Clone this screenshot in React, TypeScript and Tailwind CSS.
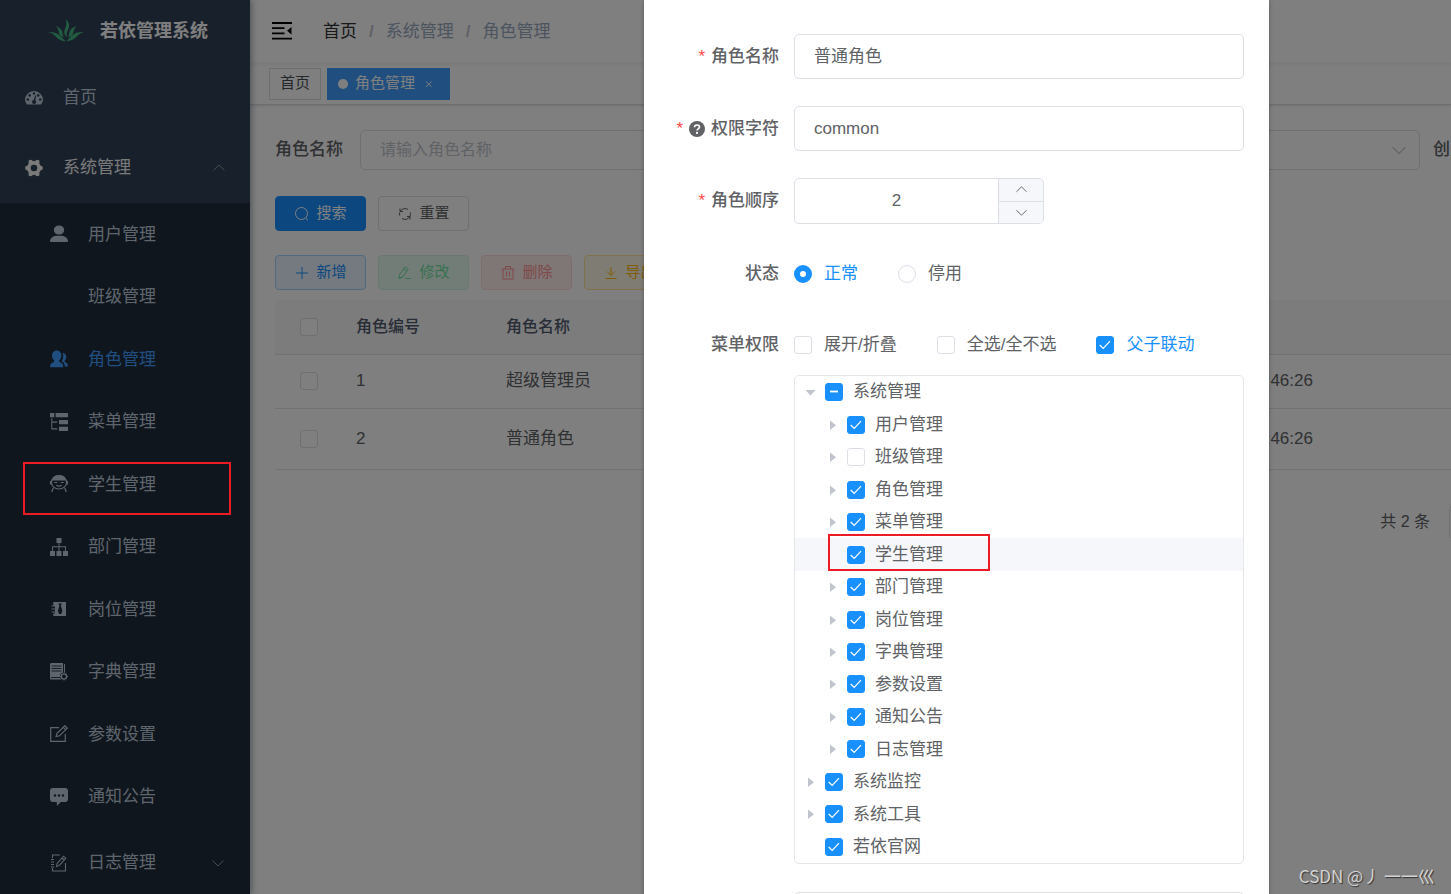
import type { ReactNode } from 'react'

const ICONS: Record<string, ReactNode> = {
  dashboard: (
    <>
      <path d="M2 15.5A9 9 0 0 1 0 11a9 9 0 0 1 18 0 9 9 0 0 1-2 4.500z" />
      <g fill="#304156">
        <circle cx="2.800" cy="10.500" r="1.300" />
        <circle cx="4.700" cy="6.400" r="1.300" />
        <circle cx="9" cy="4.500" r="1.300" />
        <circle cx="13.300" cy="6.400" r="1.300" />
        <circle cx="15.200" cy="10.500" r="1.300" />
        <path d="M10.400 6.300l.9.3-1 4.700a2 2 0 1 1-1.700-.3z" />
      </g>
    </>
  ),
  system: (
    <>
      <circle cx="9" cy="9" r="7" />
      <circle cx="2.300" cy="9" r="2.200" />
      <circle cx="15.700" cy="9" r="2.200" />
      <circle cx="5.600" cy="2.900" r="2.200" />
      <circle cx="12.400" cy="2.900" r="2.200" />
      <circle cx="5.600" cy="15.100" r="2.200" />
      <circle cx="12.400" cy="15.100" r="2.200" />
      <circle cx="9" cy="9" r="3.300" fill="#304156" />
    </>
  ),
  user: (
    <>
      <ellipse cx="9" cy="5" rx="5.200" ry="4.500" />
      <path d="M0 16.500C0 13 3 10.700 6.800 10.700h4.400c3.800 0 6.800 2.300 6.800 5.800 0 .4-1 .5-4 .5H4c-3 0-4-.1-4-.5z" />
    </>
  ),
  peoples: (
    <>
      <path d="M6.700.4c2.700 0 4.700 2.200 4.700 5.200 0 2-.9 3.900-2.300 4.900-.2 1 .4 1.300 1.600 1.900 1.700.9 2.600 2.300 2.600 4.900H0c0-2.600 1-4 2.700-4.900 1.200-.6 1.800-.9 1.600-1.900C2.900 9.500 2 7.600 2 5.600 2 2.600 4 .4 6.700.4z" />
      <path d="M12.500 3c2.100 0 3.800 1.500 3.800 4 0 1.500-.7 2.900-1.700 3.700-.2.900.3 1.100 1.300 1.700 1.400.8 2.100 1.900 2.100 4h-3.200c0-2.500-1.200-4.200-3.300-5.300 1.200-1.300 1.800-3.200 1.700-5.200 0-1.100-.3-2-.7-2.900z" />
    </>
  ),
  treeTable: (
    <path d="M0 0h4.300v4.300H0zM5.600 0H18v4.300H5.600zM9 7h9v4.200H9zM9 13.800h9V18H9zM1.300 5h1v3.600h5v1.100h-5v5.600h5v1.100h-6z" />
  ),
  student: (
    <g fill="none" stroke="currentColor" strokeWidth="1.200">
      <path d="M2.500 5C3 2.500 5.500.7 9 .7s6 1.800 6.500 4.300z" fill="currentColor" />
      <ellipse cx="9" cy="7.500" rx="7.600" ry="6.500" />
      <path d="M.6 6v3.500M17.400 6v3.500M4.300 7.500h3M10.700 7.500h3M6.300 10.300c1.500 1 3.900 1 5.400 0M3.300 13L1.700 17M14.700 13l1.600 4" />
    </g>
  ),
  tree: (
    <path d="M6.500 0h5v5h-2v3.300H16V13h2v5h-5v-5h2V9.300H9.500V13h2v5h-5v-5h2V9.300H3V13h2v5H0v-5h2V8.300h6.500V5h-2z" />
  ),
  post: (
    <>
      <path d="M3.300 2H16v14H3.300v-2.500H5v-1H1.500v-1H5v-2H1.500v-1H5v-2H1.500v-1h1.800z" />
      <path d="M8.300 3.500h3.600l-1.100 2 1.600 5.300-1.100 3.200H9l-1.100-3.200L9.400 5.500z" fill="#1f2d3d" />
    </>
  ),
  dict: (
    <>
      <path d="M0 1.500C0 .7.600 0 1.500 0H13v16.500H1.500C.6 16.500 0 16 0 15zM14 1h1v10h-1z" />
      <path d="M1.500 3h10M1.500 5.500h10M1.500 8h10M1 14.500h9" stroke="#1f2d3d" strokeWidth=".9" />
      <circle cx="14" cy="13.500" r="4" fill="#1f2d3d" />
      <circle cx="14" cy="13.500" r="2.600" fill="none" stroke="currentColor" strokeWidth="1.300" />
      <path d="M14 9.500v1M14 16.500v1M10 13.500h1M17 13.500h1M11.500 11l.8.8M16.500 11l-.8.8M11.500 16l.8-.8M16.500 16l-.8-.8" stroke="currentColor" />
    </>
  ),
  edit: (
    <path
      d="M9 2.700H.7v13.700h14.600V9M6.200 11.500l.8-3.300L14.800.8l2.400 2.300-7.700 7.700zM13.300 2.300l2.300 2.300"
      fill="none"
      stroke="currentColor"
      strokeWidth="1.200"
    />
  ),
  message: (
    <>
      <path d="M2.700 0h12.600C16.800 0 18 1.200 18 2.800v8.400c0 1.600-1.200 2.800-2.700 2.800h-4.500L7 18l-.3-4h-4C1.200 14 0 12.800 0 11.200V2.800C0 1.200 1.200 0 2.700 0z" />
      <g fill="#1f2d3d">
        <circle cx="5" cy="7.500" r="1.200" />
        <circle cx="9" cy="7.500" r="1.200" />
        <circle cx="13" cy="7.500" r="1.200" />
      </g>
    </>
  ),
  log: (
    <path
      d="M10 1H2.500v3M2.500 14v3h13V9M1 5.500h3M1 8h3M1 10.500h3M1 13h3M6.500 12.500l.7-3 6.300-7.300 2.300 2-6.300 7.200zM12 4l2.300 2"
      fill="none"
      stroke="currentColor"
      strokeWidth="1.100"
    />
  ),
}

const SUB_MENU = [
  { title: '用户管理', icon: 'user' },
  { title: '班级管理', icon: '' },
  { title: '角色管理', icon: 'peoples', active: true },
  { title: '菜单管理', icon: 'treeTable' },
  { title: '学生管理', icon: 'student' },
  { title: '部门管理', icon: 'tree' },
  { title: '岗位管理', icon: 'post' },
  { title: '字典管理', icon: 'dict' },
  { title: '参数设置', icon: 'edit' },
  { title: '通知公告', icon: 'message' },
]

const ROLES = [
  { id: 1, name: '超级管理员', key: 'admin', sort: 1, time: '2023-04-23 16:46:26', height: 'h-[54px]' },
  { id: 2, name: '普通角色', key: 'common', sort: 2, time: '2023-04-23 16:46:26', height: 'h-[61px]' },
]

type TreeNode = {
  label: string
  level: 0 | 1
  state: 'on' | 'off' | 'partial'
  caret?: 'open' | 'closed'
  current?: boolean
}

const TREE: TreeNode[] = [
  { label: '系统管理', level: 0, state: 'partial', caret: 'open' },
  { label: '用户管理', level: 1, state: 'on', caret: 'closed' },
  { label: '班级管理', level: 1, state: 'off', caret: 'closed' },
  { label: '角色管理', level: 1, state: 'on', caret: 'closed' },
  { label: '菜单管理', level: 1, state: 'on', caret: 'closed' },
  { label: '学生管理', level: 1, state: 'on', current: true },
  { label: '部门管理', level: 1, state: 'on', caret: 'closed' },
  { label: '岗位管理', level: 1, state: 'on', caret: 'closed' },
  { label: '字典管理', level: 1, state: 'on', caret: 'closed' },
  { label: '参数设置', level: 1, state: 'on', caret: 'closed' },
  { label: '通知公告', level: 1, state: 'on', caret: 'closed' },
  { label: '日志管理', level: 1, state: 'on', caret: 'closed' },
  { label: '系统监控', level: 0, state: 'on', caret: 'closed' },
  { label: '系统工具', level: 0, state: 'on', caret: 'closed' },
  { label: '若依官网', level: 0, state: 'on' },
]

function NavIcon({ name }: { name: string }) {
  return (
    <svg className="size-[18px] shrink-0" viewBox="0 0 18 18" fill="currentColor" aria-hidden="true">
      {ICONS[name]}
    </svg>
  )
}

function Chevron({ up, className }: { up?: boolean; className: string }) {
  return (
    <svg className={className} viewBox="0 0 12 12" fill="none" stroke="currentColor" aria-hidden="true">
      <path d={up ? 'M.5 8.500L6 3l5.500 5.500' : 'M.5 3.500L6 9l5.500-5.500'} />
    </svg>
  )
}

function Check({ state = 'off', label }: { state?: 'on' | 'off' | 'partial'; label?: string }) {
  return (
    <span className="grid size-[18px] shrink-0">
      <input
        type="checkbox"
        aria-label={label}
        defaultChecked={state === 'on'}
        className={`col-start-1 row-start-1 size-[18px] appearance-none rounded-[3px] border ${
          state === 'off' ? 'border-[#dcdfe6] bg-white' : 'border-[#1890ff] bg-[#1890ff]'
        }`}
      />
      {state !== 'off' && (
        <svg
          className="pointer-events-none col-start-1 row-start-1 size-[18px]"
          viewBox="0 0 18 18"
          fill="none"
          stroke="#fff"
          aria-hidden="true"
        >
          {state === 'on' ? (
            <path d="M3.700 9l3.500 3.500L14 5.200" strokeWidth="1.200" />
          ) : (
            <path d="M5 8.500h8" strokeWidth="1.800" />
          )}
        </svg>
      )}
    </span>
  )
}

function Sidebar() {
  return (
    <aside className="z-10 flex w-[250px] shrink-0 flex-col bg-[#304156] text-[17px] text-[#bfcbd9] shadow-[2px_0_6px_rgba(0,21,41,0.35)]">
      <a href="#" className="flex h-[62px] shrink-0 items-center gap-4 pl-12">
        <svg className="h-6 w-9 shrink-0" viewBox="0 0 36 24" fill="#42b883" aria-hidden="true">
          <path d="M17.500 0c3.500 3 4.500 6 3 9.500-1.500 3.500-2.500 5.500-1.500 9-2.500-2.500-3.500-5-2-8.500C18.500 6.500 19 3.500 17.500 0z" />
          <path d="M7.500 7c4.500 1.500 6.500 3.500 7 7 .2 1.700.5 3 1.500 4.500-3.500-1-5-3-5.200-5.700C10.500 10.500 9.500 8.800 7.500 7z" />
          <path d="M29 7c-4.500 1-7 3.500-7.700 7-.2 1.700-.5 3-1.300 4.500 3.300-1 5-3 5.500-5.700.4-2.300 1.500-4 3.500-5.800z" />
          <path d="M0 13c5.500-.3 9 .8 12 3.700 2 2 3.700 3.500 6 5.800-4.500-.5-7.300-1.700-9.500-4.200C6 15.500 4 14 0 13z" />
          <path d="M36 13c-5.500-.3-9 .8-12 3.500-2 1.700-3.500 3.500-5.500 5.800 4.500-.5 7-1.500 9.500-4 2.500-2.800 4.500-4.300 8-5.300z" />
        </svg>
        <h1 className="text-[18px] font-bold text-white">若依管理系统</h1>
      </a>
      <nav className="mt-px">
        <a href="#" className="flex h-[70px] items-center gap-5 px-[25px]">
          <NavIcon name="dashboard" />
          首页
        </a>
        <button type="button" className="flex h-[70px] w-full items-center gap-5 px-[25px] text-[#f4f4f5]">
          <NavIcon name="system" />
          <span className="flex-1 text-left">系统管理</span>
          <Chevron up className="size-3 text-[#909399]" />
        </button>
        <div className="bg-[#1f2d3d]">
          <ul className="flex h-[625px] flex-col">
            {SUB_MENU.map((item) => (
              <li key={item.title} className="flex flex-1">
                <a
                  href="#"
                  className={`flex flex-1 items-center gap-5 pl-[50px] ${item.active ? 'text-[#409eff]' : ''}`}
                >
                  <NavIcon name={item.icon} />
                  {item.title}
                </a>
              </li>
            ))}
          </ul>
          <button type="button" className="flex h-[70px] w-full items-center gap-5 pr-[26px] pl-[50px]">
            <NavIcon name="log" />
            <span className="flex-1 text-left">日志管理</span>
            <Chevron className="size-3 text-[#909399]" />
          </button>
        </div>
      </nav>
    </aside>
  )
}

function Navbar() {
  return (
    <header className="flex h-[63px] shrink-0 items-center pl-[22px] shadow-[0_1px_4px_rgba(0,21,41,0.08)]">
      <button type="button" aria-label="折叠菜单">
        <svg className="size-5" viewBox="0 0 20 20" aria-hidden="true">
          <path d="M0 1h20M0 6.200h12.500M0 11.400h12.500M0 16.600h20" stroke="#000" strokeWidth="1.800" fill="none" />
          <path d="M19.500 5v7.500L15 8.800z" />
        </svg>
      </button>
      <nav className="ml-[31px] flex gap-3 text-[17px] text-[#97a8be]">
        <a href="#" className="text-[#303133]">
          首页
        </a>
        <span className="font-bold text-[#c0c4cc]">/</span>
        <span>系统管理</span>
        <span className="font-bold text-[#c0c4cc]">/</span>
        <span>角色管理</span>
      </nav>
    </header>
  )
}

function TagsView() {
  return (
    <div className="flex h-[42px] shrink-0 items-center gap-1.5 border-b border-[#d8dce5] pl-[19px] text-[15px] shadow-[0_1px_3px_rgba(0,0,0,0.12)]">
      <a href="#" className="flex h-8 items-center border border-[#d8dce5] px-2.5 text-[#495057]">
        首页
      </a>
      <a href="#" className="flex h-8 items-center border border-[#409eff] bg-[#409eff] px-2.5 text-white">
        <span className="mr-[7px] size-2.5 rounded-full bg-white" />
        角色管理
        <svg className="mr-1.5 ml-2.5 size-2" viewBox="0 0 8 8" stroke="#fff" fill="none" aria-hidden="true">
          <path d="M1 1.500l5.500 5.500M6.500 1.500L1 7" />
        </svg>
      </a>
    </div>
  )
}

function SearchForm() {
  return (
    <form className="flex text-[17px] text-[#606266]">
      <label htmlFor="q-name" className="w-[85px] shrink-0 self-center font-medium">
        角色名称
      </label>
      <input
        id="q-name"
        placeholder="请输入角色名称"
        className="h-10 w-[300px] shrink-0 rounded-[5px] border border-[#dcdfe6] px-[19px] text-[16px] placeholder:text-[#c0c4cc]"
      />
      <label htmlFor="q-key" className="ml-[13px] w-[85px] shrink-0 self-center font-medium">
        权限字符
      </label>
      <input
        id="q-key"
        placeholder="请输入权限字符"
        className="h-10 w-[300px] shrink-0 rounded-[5px] border border-[#dcdfe6] px-[19px] text-[16px] placeholder:text-[#c0c4cc]"
      />
      <label htmlFor="q-status" className="ml-3 w-[50px] shrink-0 self-center font-medium">
        状态
      </label>
      <span className="grid w-[300px] shrink-0 items-center">
        <select
          id="q-status"
          className="col-start-1 row-start-1 h-10 appearance-none rounded-[5px] border border-[#dcdfe6] px-[19px] text-[16px] text-[#c0c4cc]"
        >
          <option>角色状态</option>
          <option>正常</option>
          <option>停用</option>
        </select>
        <Chevron className="pointer-events-none col-start-1 row-start-1 mr-3.5 size-3.5 justify-self-end text-[#c0c4cc]" />
      </span>
      <span className="ml-[13px] shrink-0 self-center font-medium">创建时间</span>
    </form>
  )
}

const BUTTON = 'flex h-[35px] w-[91px] shrink-0 items-center justify-center gap-1.5 rounded-[4px] border text-[15px]'

function ButtonIcon({ d }: { d: string }) {
  return (
    <svg className="size-4" viewBox="0 0 16 16" fill="none" stroke="currentColor" aria-hidden="true">
      <path d={d} />
    </svg>
  )
}

function Toolbar() {
  return (
    <>
      <div className="mt-[26px] flex gap-3">
        <button type="button" className={`${BUTTON} border-[#1890ff] bg-[#1890ff] text-white`}>
          <ButtonIcon d="M7.500 1.500a6 6 0 1 1 0 12 6 6 0 0 1 0-12zM11.700 12l2.300 2.300" />
          搜索
        </button>
        <button type="button" className={`${BUTTON} border-[#dcdfe6] bg-white text-[#606266]`}>
          <ButtonIcon d="M3 2.500v3h3M3.200 5.300A5.500 5.500 0 0 1 11 3.500M13.300 6.500a5.500 5.500 0 0 1-.5 4.200M13 13.500v-3h-3M12.800 10.700A5.500 5.500 0 0 1 5 12.500M2.700 9.500a5.500 5.500 0 0 1 0-3" />
          重置
        </button>
      </div>
      <div className="mt-6 flex gap-3">
        <button type="button" className={`${BUTTON} border-[#a3d3ff] bg-[#e8f4ff] text-[#1890ff]`}>
          <ButtonIcon d="M8 2v12M2 8h12" />
          新增
        </button>
        <button type="button" disabled className={`${BUTTON} border-[#d0f5e0] bg-[#e7faf0] text-[#71e2a3]`}>
          <ButtonIcon d="M2 13.500l.6-4L8 2l3.300 2.300-5.500 7.500zM2 13.500l4-1.700M8 13.500h6M6.500 4l3.300 2.300" />
          修改
        </button>
        <button type="button" disabled className={`${BUTTON} border-[#ffdbdb] bg-[#ffeded] text-[#ff9292]`}>
          <ButtonIcon d="M1.500 4h13M3 4v10h10V4M5.500 4V1.500h5V4M6.500 6.500v5M9.500 6.500v5" />
          删除
        </button>
        <button type="button" className={`${BUTTON} border-[#ffe399] bg-[#fff8e6] text-[#ffba00]`}>
          <ButtonIcon d="M8 2v8.500M4 6.500l4 4 4-4M2.500 13.500h11" />
          导出
        </button>
      </div>
    </>
  )
}

function RoleTable() {
  return (
    <table className="mt-2.5 w-full table-fixed border-collapse text-left text-[17px] text-[#606266]">
      <colgroup>
        <col className="w-[69px]" />
        <col className="w-[150px]" />
        <col className="w-[188px]" />
        <col className="w-[188px]" />
        <col className="w-[125px]" />
        <col className="w-[125px]" />
        <col className="w-[228px]" />
        <col />
      </colgroup>
      <thead>
        <tr className="h-[54px] border-b border-[#dfe6ec] bg-[#f8f8f9] text-[16px] text-[#515a6e]">
          <th className="pl-[25px]">
            <Check label="全选" />
          </th>
          <th className="px-3 font-medium">角色编号</th>
          <th className="px-3 font-medium">角色名称</th>
          <th className="px-3 font-medium">权限字符</th>
          <th className="px-3 text-right font-medium">显示顺序</th>
          <th className="px-3 text-center font-medium">状态</th>
          <th className="text-center font-medium">创建时间</th>
          <th />
        </tr>
      </thead>
      <tbody>
        {ROLES.map((role) => (
          <tr key={role.id} className={`${role.height} border-b border-[#dfe6ec]`}>
            <td className="pl-[25px]">
              <Check label={role.name} />
            </td>
            <td className="px-3">{role.id}</td>
            <td className="px-3">{role.name}</td>
            <td className="px-3">{role.key}</td>
            <td className="px-3 text-right">{role.sort}</td>
            <td className="px-3 text-center">正常</td>
            <td className="text-center whitespace-nowrap">{role.time}</td>
            <td />
          </tr>
        ))}
      </tbody>
    </table>
  )
}

function FormLabel({ children, htmlFor, required }: { children: ReactNode; htmlFor?: string; required?: boolean }) {
  return (
    <label htmlFor={htmlFor} className="flex w-[135px] shrink-0 items-center justify-end gap-1.5 font-medium">
      {required && <span className="text-[#ff4949]">*</span>}
      {children}
    </label>
  )
}

function MenuTree() {
  return (
    <ul className="mt-2 ml-[150px] flex h-[489px] flex-col rounded-[5px] border border-[#e5e6e7]">
      {TREE.map((node) => (
        <li
          key={`${node.level}-${node.label}`}
          className={`relative flex flex-1 items-center ${node.level === 1 ? 'pl-[30px]' : 'pl-2'} ${
            node.current ? 'bg-[#f5f7fa]' : ''
          }`}
        >
          <span className="flex w-[15px] justify-center">
            {node.caret && (
              <svg className="size-3" viewBox="0 0 12 12" fill="#c0c4cc" aria-hidden="true">
                <path d={node.caret === 'open' ? 'M.5 4h10l-5 5.500z' : 'M3 1.500v9.500l6-4.700z'} />
              </svg>
            )}
          </span>
          <label className="ml-[7px] flex items-center gap-2.5">
            <Check state={node.state} />
            {node.label}
          </label>
          {node.current && (
            <span className="absolute -top-1 left-[33px] h-[37px] w-[162px] border-2 border-[#ed1c24]" />
          )}
        </li>
      ))}
    </ul>
  )
}

function RoleDialog() {
  return (
    <div className="absolute inset-0 z-20 flex justify-center overflow-hidden bg-black/50 pl-[462px]">
      <form
        role="dialog"
        aria-label="修改角色"
        className="h-fit w-[625px] shrink-0 bg-white pt-[34px] pr-[25px] pb-10 text-[17px] text-[#606266] shadow-[0_1px_4px_rgba(0,0,0,0.3)]"
      >
        <div className="flex flex-col gap-[27px]">
          <div className="flex h-[45px] gap-[15px]">
            <FormLabel htmlFor="name" required>
              角色名称
            </FormLabel>
            <input
              id="name"
              defaultValue="普通角色"
              className="min-w-0 flex-1 rounded-[5px] border border-[#dcdfe6] px-[19px]"
            />
          </div>
          <div className="flex h-[45px] gap-[15px]">
            <FormLabel htmlFor="key" required>
              <svg className="size-4" viewBox="0 0 16 16" aria-hidden="true">
                <circle cx="8" cy="8" r="8" fill="#606266" />
                <path d="M5.500 6.300c0-3.200 5-3 5-.2 0 1.700-2.500 1.700-2.500 3.500" fill="none" stroke="#fff" strokeWidth="1.600" />
                <circle cx="8" cy="11.900" r="1.100" fill="#fff" />
              </svg>
              权限字符
            </FormLabel>
            <input
              id="key"
              defaultValue="common"
              className="min-w-0 flex-1 rounded-[5px] border border-[#dcdfe6] px-[19px]"
            />
          </div>
          <div className="flex h-[46px] gap-[15px]">
            <FormLabel htmlFor="sort" required>
              角色顺序
            </FormLabel>
            <div className="flex w-[250px] overflow-hidden rounded-[5px] border border-[#dcdfe6]">
              <input id="sort" defaultValue="2" className="min-w-0 flex-1 text-center" />
              <div className="flex w-[45px] flex-col border-l border-[#dcdfe6] bg-[#f5f7fa]">
                <button
                  type="button"
                  aria-label="增加"
                  className="flex flex-1 items-center justify-center border-b border-[#dcdfe6]"
                >
                  <Chevron up className="size-[11px]" />
                </button>
                <button type="button" aria-label="减少" className="flex flex-1 items-center justify-center">
                  <Chevron className="size-[11px]" />
                </button>
              </div>
            </div>
          </div>
          <div className="flex h-[45px] gap-[15px]">
            <FormLabel>状态</FormLabel>
            <div className="flex items-center gap-10">
              <label className="flex items-center gap-3 text-[#1890ff]">
                <input
                  type="radio"
                  name="status"
                  defaultChecked
                  className="size-[18px] appearance-none rounded-full border-[6px] border-[#1890ff] bg-white"
                />
                正常
              </label>
              <label className="flex items-center gap-3">
                <input
                  type="radio"
                  name="status"
                  className="size-[18px] appearance-none rounded-full border border-[#dcdfe6] bg-white"
                />
                停用
              </label>
            </div>
          </div>
          <div className="flex h-[44px] gap-[15px]">
            <FormLabel>菜单权限</FormLabel>
            <div className="flex items-center gap-10">
              <label className="flex items-center gap-3">
                <Check />
                展开/折叠
              </label>
              <label className="flex items-center gap-3">
                <Check />
                全选/全不选
              </label>
              <label className="flex items-center gap-3 text-[#1890ff]">
                <Check state="on" />
                父子联动
              </label>
            </div>
          </div>
        </div>
        <MenuTree />
        <div className="mt-7 flex gap-[15px]">
          <FormLabel htmlFor="remark">备注</FormLabel>
          <textarea id="remark" rows={2} className="min-w-0 flex-1 rounded-[5px] border border-[#dcdfe6] px-[19px]" />
        </div>
      </form>
    </div>
  )
}

export default function App() {
  return (
    <div className="relative flex h-screen overflow-hidden bg-white font-['Liberation_Sans','Noto_Sans_CJK_SC',sans-serif]">
      <Sidebar />
      <div className="flex min-w-0 flex-1 flex-col">
        <Navbar />
        <TagsView />
        <main className="flex-1 overflow-hidden pt-[25px] pl-[25px]">
          <SearchForm />
          <Toolbar />
          <RoleTable />
          <div className="mt-[35px] flex items-center justify-end gap-[19px] text-[16px] text-[#606266]">
            <span>共 2 条</span>
            <select
              aria-label="每页条数"
              className="-mr-[123px] h-[34px] w-[125px] appearance-none rounded-[4px] border border-[#dcdfe6] px-3"
            >
              <option>10条/页</option>
            </select>
          </div>
        </main>
      </div>

      <RoleDialog />

      {/* Callout around the new sidebar entry */}
      <span className="absolute top-[462px] left-[23px] z-30 h-[53px] w-[208px] border-2 border-[#ed1c24]" />

      <span className="absolute right-4 bottom-1.5 z-30 font-['Noto_Sans_CJK_SC',sans-serif] text-[17px] text-[#d4d4d4] [text-shadow:1px_1px_1px_rgba(0,0,0,0.6)]">
        CSDN @丿 一一巛
      </span>
    </div>
  )
}
